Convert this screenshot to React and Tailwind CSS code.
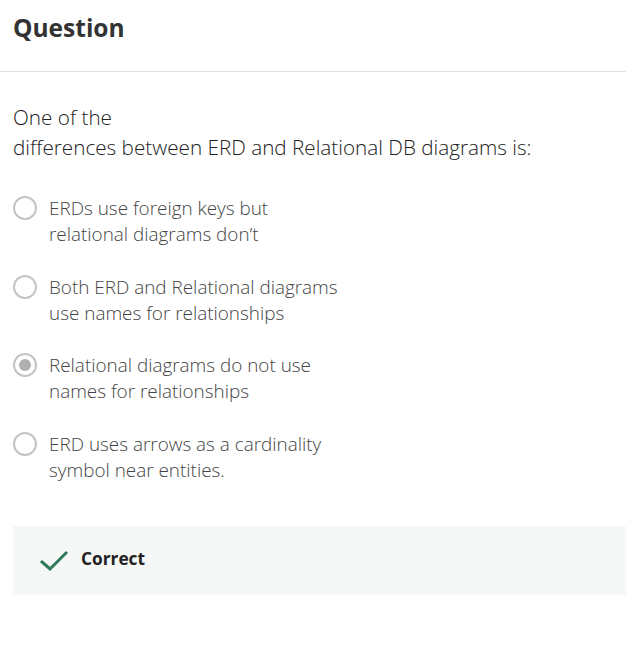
export default function App() {
  const options = [
    ['ERDs use foreign keys but', 'relational diagrams don’t'],
    ['Both ERD and Relational diagrams', 'use names for relationships'],
    ['Relational diagrams do not use', 'names for relationships'],
    ['ERD uses arrows as a cardinality', 'symbol near entities.'],
  ];
  const selected = 2;

  return (
    <div className="min-h-screen bg-white font-['Open_Sans',sans-serif] overflow-hidden">
      <div className="h-[72px] border-b border-[#e0e0e0] px-[13px] pt-[12px]">
        <h1 className="text-[24.5px] font-bold leading-[32px] text-[#333]">Question</h1>
      </div>

      <div className="pl-[13px] pt-[30px]">
        <p className="text-[20.7px] font-light leading-[30px] text-[#222]">
          One of the
          <br />
          differences between ERD and Relational DB diagrams is:
        </p>

        <div className="mt-[33px] flex flex-col gap-[26.7px]">
          {options.map((lines, i) => (
            <div key={i} className="flex items-start">
              <div className="mt-[1px] flex h-[24px] w-[24px] shrink-0 items-center justify-center rounded-full border-2 border-[#c4c4c4]">
                {i === selected && <div className="h-[12px] w-[12px] rounded-full bg-[#b0b0b0]" />}
              </div>
              <div className="ml-[12px] text-[18.9px] font-light leading-[26px] text-[#444]">
                {lines[0]}
                <br />
                {lines[1]}
              </div>
            </div>
          ))}
        </div>

        <div className="mt-[43px] flex h-[69px] items-center bg-[#f5f8f7] pl-[27px]">
          <svg width="28" height="22" viewBox="0 0 28 22" fill="none" className="mt-[1px]">
            <path d="M2 12 L10 19 L26 3" stroke="#2e7a58" strokeWidth="3" strokeLinecap="square" />
          </svg>
          <span className="mb-[3px] ml-[13px] text-[17.3px] font-bold text-[#222]">Correct</span>
        </div>
      </div>
    </div>
  );
}
